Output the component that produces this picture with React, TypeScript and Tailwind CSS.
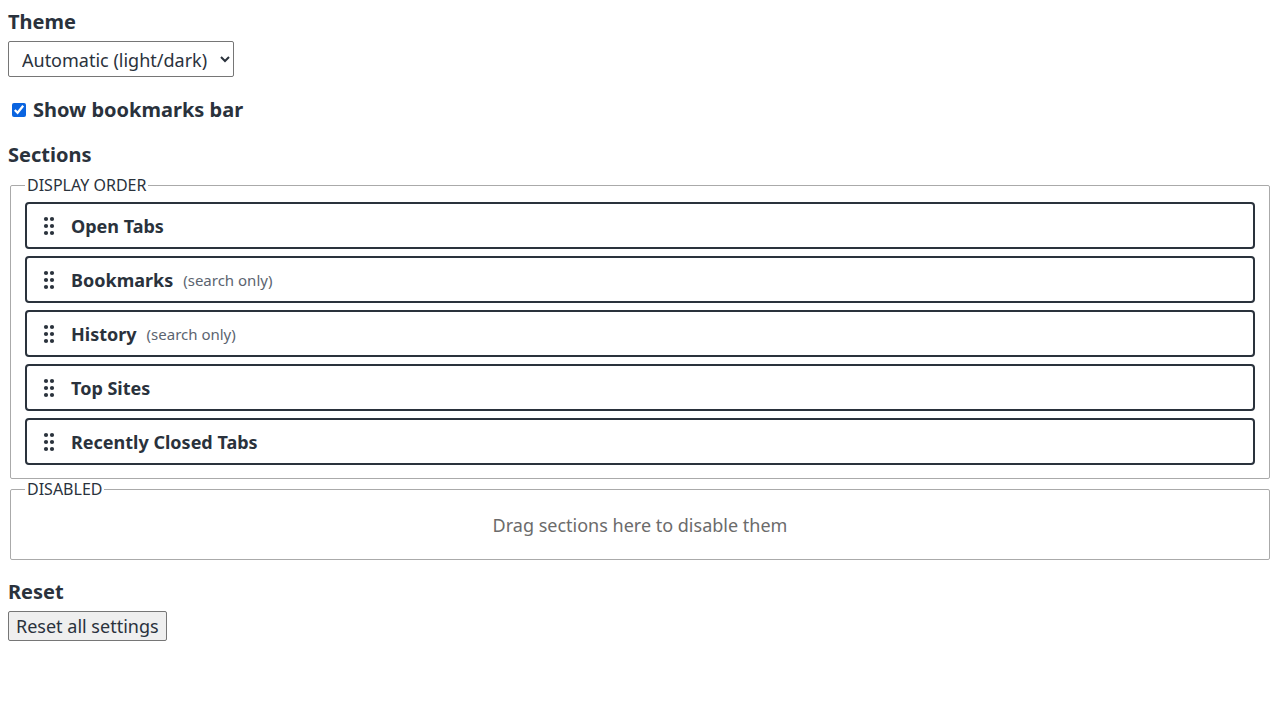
import React, { useState } from "react";

const sections = [
  { name: "Open Tabs", note: "" },
  { name: "Bookmarks", note: "(search only)" },
  { name: "History", note: "(search only)" },
  { name: "Top Sites", note: "" },
  { name: "Recently Closed Tabs", note: "" },
];

const Grip = () => (
  <svg width="12" height="20" viewBox="0 0 12 20" className="shrink-0 text-[#2a323c]">
    <circle cx="3" cy="3" r="2.1" fill="currentColor" />
    <circle cx="9" cy="3" r="2.1" fill="currentColor" />
    <circle cx="3" cy="10" r="2.1" fill="currentColor" />
    <circle cx="9" cy="10" r="2.1" fill="currentColor" />
    <circle cx="3" cy="17" r="2.1" fill="currentColor" />
    <circle cx="9" cy="17" r="2.1" fill="currentColor" />
  </svg>
);

const App = () => {
  const [theme, setTheme] = useState("auto");
  const [showBar, setShowBar] = useState(true);

  return (
    <div className="min-h-screen bg-white p-2 text-[#2a323c] font-['Noto_Sans',sans-serif]">
      <h2 className="text-[20px] font-bold leading-[26px] mt-[1px]">Theme</h2>
      <select
        className="mt-[6px] h-[36px] w-[226px] rounded-[2px] border border-[#767676] bg-white pl-[9px] pr-[4px] pt-[1px] text-[18px] text-[#2a323c]"
        value={theme}
        onChange={(e) => setTheme(e.target.value)}
      >
        <option value="auto">Automatic (light/dark)</option>
        <option value="light">Light</option>
        <option value="dark">Dark</option>
      </select>

      <label className="mt-[20px] flex items-center gap-[7px] text-[20px] font-bold leading-[26px]">
        <input
          type="checkbox"
          className="ml-[4px] h-[14px] w-[14px] accent-[#0a64e0]"
          checked={showBar}
          onChange={(e) => setShowBar(e.target.checked)}
        />
        Show bookmarks bar
      </label>

      <h2 className="mt-[19px] text-[20px] font-bold leading-[26px]">Sections</h2>

      <fieldset className="mx-[2px] mt-[6px] rounded-[2px] border border-[#aaaaaa] px-[14px] pt-[6px] pb-[13px]">
        <legend className="px-[2px] text-[16px] leading-[22px]">DISPLAY ORDER</legend>
        <div className="flex flex-col gap-[7px]">
          {sections.map((s) => (
            <div
              key={s.name}
              className="flex h-[47px] items-center rounded-[4px] border-2 border-[#2a323c] pt-[1px] pl-[16px]"
            >
              <Grip />
              <span className="ml-[16px] text-[18px] font-bold">{s.name}</span>
              {s.note && <span className="ml-[10px] text-[15px] text-[#5b6470]">{s.note}</span>}
            </div>
          ))}
        </div>
      </fieldset>

      <fieldset className="mx-[2px] -mt-[1px] rounded-[2px] border border-[#aaaaaa] px-[14px] pt-[12px] pb-[20px]">
        <legend className="px-[2px] text-[16px] leading-[22px]">DISABLED</legend>
        <p className="text-center text-[18px] text-[#6b6b6b]">Drag sections here to disable them</p>
      </fieldset>

      <h2 className="mt-[19px] text-[20px] font-bold leading-[26px]">Reset</h2>
      <button className="mt-[6px] h-[30px] rounded-[2px] border border-[#767676] bg-[#efefef] px-[7px] text-[18px] text-[#2a323c]">
        Reset all settings
      </button>
    </div>
  );
};

export default App;
